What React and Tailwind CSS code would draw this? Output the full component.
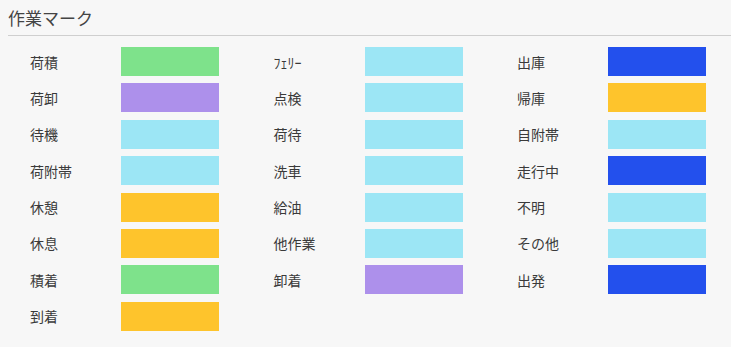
import React from "react";

const GREEN = "bg-[#7ee28b]";
const PURPLE = "bg-[#ad90eb]";
const LIGHT = "bg-[#9ce6f5]";
const YELLOW = "bg-[#fec42c]";
const BLUE = "bg-[#2350ed]";

const columns = [
  [
    ["荷積", GREEN],
    ["荷卸", PURPLE],
    ["待機", LIGHT],
    ["荷附帯", LIGHT],
    ["休憩", YELLOW],
    ["休息", YELLOW],
    ["積着", GREEN],
    ["到着", YELLOW],
  ],
  [
    ["ﾌｪﾘｰ", LIGHT],
    ["点検", LIGHT],
    ["荷待", LIGHT],
    ["洗車", LIGHT],
    ["給油", LIGHT],
    ["他作業", LIGHT],
    ["卸着", PURPLE],
  ],
  [
    ["出庫", BLUE],
    ["帰庫", YELLOW],
    ["自附帯", LIGHT],
    ["走行中", BLUE],
    ["不明", LIGHT],
    ["その他", LIGHT],
    ["出発", BLUE],
  ],
];

function App() {
  return (
    <div
      className="h-[347px] w-[731px] overflow-hidden bg-[#f7f7f7] text-[#333]"
      style={{ fontFamily: '"Noto Sans CJK JP", "Noto Sans", sans-serif' }}
    >
      <div className="ml-2 border-b border-[#cfcfcf] pt-[6px] pb-[5px]">
        <h2 className="text-[17px] leading-6 text-[#444]">作業マーク</h2>
      </div>

      <div className="flex pt-[11px] pl-[30px]">
        {columns.map((col, i) => (
          <div
            key={i}
            className={`flex flex-col gap-y-[7.4px] ${i < 2 ? "w-[243.5px]" : ""}`}
          >
            {col.map(([label, color]) => (
              <div key={label} className="flex h-[29px] items-center">
                <span className="w-[91px] text-[14px] leading-none text-[#3a3a3a]">
                  {label}
                </span>
                <div className={`h-[29px] w-[98px] ${color}`} />
              </div>
            ))}
          </div>
        ))}
      </div>
    </div>
  );
}

export default App;
